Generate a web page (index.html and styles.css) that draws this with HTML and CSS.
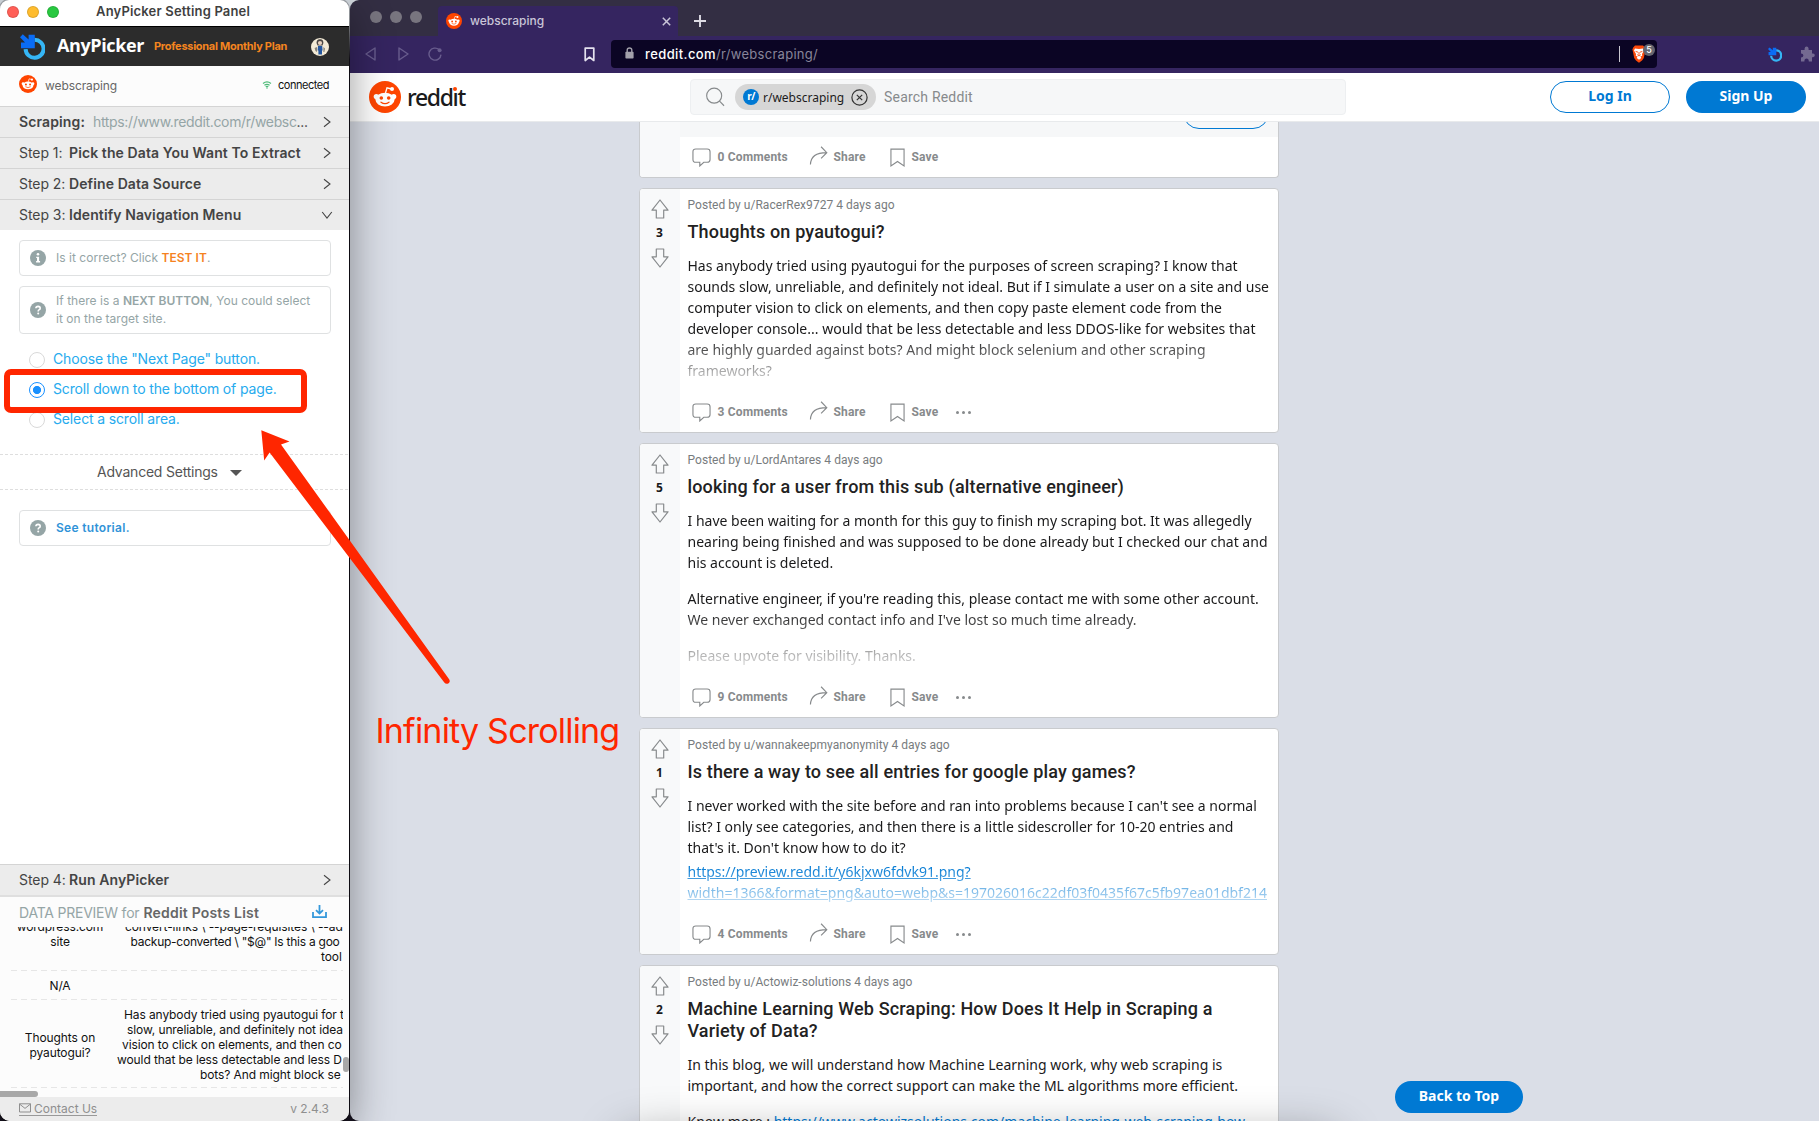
FILE: index.html
```
<!DOCTYPE html>
<html lang="en">
<head>
<meta charset="utf-8">
<title>AnyPicker Setting Panel</title>
<link rel="stylesheet" href="styles.css">
</head>
<body>
<svg class="sprite" width="0" height="0">
  <symbol id="snoo" viewBox="0 0 32 32">
    <circle cx="16" cy="16" r="16" fill="#ff4500"/>
    <path d="M16.5 12 L18 6.8 L22.5 8" fill="none" stroke="#fff" stroke-width="1.3"/>
    <circle cx="23" cy="8" r="2" fill="#fff"/>
    <circle cx="7.3" cy="15.6" r="2.6" fill="#fff"/>
    <circle cx="24.7" cy="15.6" r="2.6" fill="#fff"/>
    <ellipse cx="16" cy="18.6" rx="9.6" ry="6.9" fill="#fff"/>
    <circle cx="12.3" cy="17" r="1.8" fill="#ff4500"/>
    <circle cx="19.7" cy="17" r="1.8" fill="#ff4500"/>
    <path d="M12 21.2 Q16 24 20 21.2" fill="none" stroke="#ff4500" stroke-width="1.3" stroke-linecap="round"/>
  </symbol>
  <symbol id="picker" viewBox="0 0 25 26">
    <path d="M14.5 5.8 A9 9 0 1 1 5.6 15.2" fill="none" stroke="#35b6f5" stroke-width="4"/>
    <path d="M2.8 0.3 L8.6 5.4 V0.8 H14.8 V14.3 H1 V8.6 H5 L0 3.2 Z" fill="#0a6cf5"/>
  </symbol>
  <symbol id="chev" viewBox="0 0 8 12"><path d="M1 1.2 L7 6 L1 10.8" fill="none" stroke="#444" stroke-width="1.1"/></symbol>
  <symbol id="help" viewBox="0 0 16 16">
    <circle cx="8" cy="8" r="8" fill="#95a5a6"/>
    <path d="M5.9 6.3 Q6 4.4 8.1 4.4 Q10.2 4.5 10.2 6.2 Q10.2 7.3 9 7.9 Q8.2 8.3 8.2 9.4" fill="none" stroke="#fff" stroke-width="1.6"/>
    <circle cx="8.2" cy="11.5" r="1" fill="#fff"/>
  </symbol>
  <symbol id="info" viewBox="0 0 16 16">
    <circle cx="8" cy="8" r="8" fill="#95a5a6"/>
    <circle cx="8" cy="4.3" r="1.3" fill="#fff"/>
    <path d="M6.2 6.7 H9.1 V11 H10.1 V12.4 H6.1 V11 H7 V8 H6.2 Z" fill="#fff"/>
  </symbol>
  <symbol id="up" viewBox="0 0 18 20"><path d="M9 1 L17 11.2 H12.7 V19 H5.3 V11.2 H1 Z" fill="none" stroke="#878a8c" stroke-width="1.2" stroke-linejoin="round"/></symbol>
  <symbol id="down" viewBox="0 0 18 20"><path d="M9 19 L17 8.8 H12.7 V1 H5.3 V8.8 H1 Z" fill="none" stroke="#878a8c" stroke-width="1.2" stroke-linejoin="round"/></symbol>
  <symbol id="comment" viewBox="0 0 20 20"><path d="M4 1 H16 Q19 1 19 4 V12 Q19 15 16 15 H12.4 L8.2 18.9 V15 H4 Q1 15 1 12 V4 Q1 1 4 1 Z" fill="none" stroke="#878a8c" stroke-width="1.2"/></symbol>
  <symbol id="share" viewBox="0 0 20 20"><path d="M1 19.5 Q1.5 7 18 7 M12.2 0.8 L18.2 7 L12.2 13" fill="none" stroke="#878a8c" stroke-width="1.2"/></symbol>
  <symbol id="save" viewBox="0 0 16 20"><path d="M1 1 H15 V19 L8 14.2 L1 19 Z" fill="none" stroke="#878a8c" stroke-width="1.2"/></symbol>
</svg>

<div class="desktop">
  <aside class="panel">
    <div class="titlebar">
      <span class="light red"></span><span class="light amber"></span><span class="light green"></span>
      <span class="title">AnyPicker Setting Panel</span>
    </div>
    <header class="brandbar">
      <svg class="brand-icon"><use href="#picker"/></svg>
      <span class="brand">AnyPicker</span>
      <span class="plan">Professional Monthly Plan</span>
      <svg class="avatar" viewBox="0 0 18 18">
        <circle cx="9" cy="9" r="9" fill="#f3ead6"/>
        <path d="M5.5 5 Q5.5 1 9 1.2 Q12.5 1 12.4 5 L11.5 7.5 H6.6 Z" fill="#4a4644"/>
        <circle cx="9" cy="5" r="2.1" fill="#e9d3c0"/>
        <path d="M7 8 H11.2 L11.6 12.5 H11 V16.5 H7.4 V12.5 H6.6 Z" fill="#24569f"/>
        <path d="M3.6 10 L6 9 V14 L4.5 13 Z M12.4 9 L14 10.5 L13.4 14 H12.4 Z" fill="#8a8378"/>
      </svg>
    </header>
    <div class="site">
      <svg class="site-icon"><use href="#snoo"/></svg>
      <span class="site-name">webscraping</span>
      <svg class="wifi" viewBox="0 0 12 10"><path d="M1 3.2 Q6 -0.8 11 3.2 M2.8 5.4 Q6 2.8 9.2 5.4 M4.4 7.3 Q6 6 7.6 7.3" fill="none" stroke="#4dbb78" stroke-width="1.5"/><circle cx="6" cy="8.7" r="0.9" fill="#4dbb78"/></svg>
      <span class="status">connected</span>
    </div>
    <div class="step"><b class="scr">Scraping:</b><span class="url">https://www.reddit.com/r/websc<i>...</i></span><svg class="chev"><use href="#chev"/></svg></div>
    <div class="step"><span>Step 1:</span><b>Pick the Data You Want To Extract</b><svg class="chev"><use href="#chev"/></svg></div>
    <div class="step"><span>Step 2:</span><b>Define Data Source</b><svg class="chev"><use href="#chev"/></svg></div>
    <div class="step last"><span>Step 3:</span><b>Identify Navigation Menu</b><svg class="chev open"><use href="#chev"/></svg></div>
    <main class="work">
      <div class="note"><svg><use href="#info"/></svg><p>Is it correct? Click <b class="test">TEST IT</b>.</p></div>
      <div class="note tall"><svg><use href="#help"/></svg><p>If there is a <b>NEXT BUTTON</b>, You could select<br>it on the target site.</p></div>
      <div class="radios">
        <label><span class="dot"></span><span class="opt">Choose the "Next Page" button.</span></label>
        <label><span class="dot on"></span><span class="opt">Scroll down to the bottom of page.</span></label>
        <label><span class="dot"></span><span class="opt">Select a scroll area.</span></label>
      </div>
      <div class="advanced">Advanced Settings<span class="caret"></span></div>
      <div class="note"><svg><use href="#help"/></svg><p><b class="tut">See tutorial.</b></p></div>
    </main>
    <div class="step run"><span>Step 4:</span><b>Run AnyPicker</b><svg class="chev"><use href="#chev"/></svg></div>
    <div class="preview-head">
      <span>DATA PREVIEW for</span><b>Reddit Posts List</b>
      <svg viewBox="0 0 15 14"><path d="M1 7 V12.2 H14 V7 M7.5 0 V8 M4 5.2 L7.5 8.6 L11 5.2" fill="none" stroke="#3498db" stroke-width="1.8"/></svg>
    </div>
    <div class="table">
      <div class="rows">
        <div class="row cut">
          <div class="c1">wordpress.com<br>site</div>
          <div class="c2"><p class="l1">convert-links \ --page-requisites \ --ad</p><p class="l2">backup-converted \ "$@" Is this a goo</p><p class="l3">tool</p></div>
        </div>
        <div class="row na"><div class="c1">N/A</div><div class="c2"></div></div>
        <div class="row"><div class="c1">Thoughts on<br>pyautogui?</div>
          <div class="c2"><p class="l4">Has anybody tried using pyautogui for t</p><p class="l5">slow, unreliable, and definitely not idea</p><p class="l6">vision to click on elements, and then co</p><p class="l7">would that be less detectable and less D</p><p class="l8">bots? And might block se</p></div>
        </div>
      </div>
      <span class="vbar"></span>
      <span class="hbar"></span>
    </div>
    <footer class="foot">
      <a><svg viewBox="0 0 12 10"><path d="M0.5 0.8 H11.5 V9 H0.5 Z M0.5 1 L6 5.4 L11.5 1" fill="none" stroke="#8f8f8f"/></svg> Contact Us</a>
      <span>v 2.4.3</span>
    </footer>
  </aside>

  <section class="browser">
    <div class="tabs">
      <span class="wdot"></span><span class="wdot"></span><span class="wdot"></span>
      <div class="tab"><svg class="fav"><use href="#snoo"/></svg><span class="tabname">webscraping</span>
        <svg class="close" viewBox="0 0 9 9"><path d="M0.8 0.8 L8.2 8.2 M8.2 0.8 L0.8 8.2" stroke="#c9c5d8" stroke-width="1.5"/></svg></div>
      <svg class="plus" viewBox="0 0 12 12"><path d="M6 0 V12 M0 6 H12" stroke="#dddbe4" stroke-width="1.9"/></svg>
    </div>
    <div class="toolbar">
      <svg class="nav" viewBox="0 0 14 14"><path d="M11 1 V13 L2 7 Z" fill="none" stroke="#685c8d" stroke-width="1.4" stroke-linejoin="round"/></svg>
      <svg class="nav" viewBox="0 0 14 14"><path d="M3 1 V13 L12 7 Z" fill="none" stroke="#685c8d" stroke-width="1.4" stroke-linejoin="round"/></svg>
      <svg class="nav" viewBox="0 0 14 14"><path d="M11 2.6 A6 6 0 1 0 13 7.6" fill="none" stroke="#685c8d" stroke-width="1.4"/><circle cx="11.6" cy="3.2" r="2" fill="#685c8d"/></svg>
      <svg class="mark" viewBox="0 0 10 14"><path d="M1 1 H9 V12.6 L5 9.4 L1 12.6 Z" fill="none" stroke="#e4e1ee" stroke-width="1.6" stroke-linejoin="round"/></svg>
      <div class="omni">
        <svg class="lock" viewBox="0 0 9 12"><rect x="0.4" y="4.8" width="8.2" height="6.8" rx="0.8" fill="#a3a1ab"/><path d="M2.2 5 V3 Q2.3 1 4.5 1 Q6.7 1 6.8 3 V5" fill="none" stroke="#a3a1ab" stroke-width="1.4"/></svg>
        <span class="host">reddit.com</span><span class="path">/r/webscraping/</span>
        <span class="bar"></span>
        <span class="brave"><svg viewBox="0 0 14 18"><path d="M3 0.4 H11 L12.8 2.4 L13.6 4.6 L13 7 L11.8 13 L10 15.5 L7 17.8 L4 15.5 L2.2 13 L1 7 L0.4 4.6 L1.2 2.4 Z" fill="#fb4a0b"/><path d="M3 3.4 L7 4 L11 3.4 L12 5.6 L10 9 L10.2 11 L8.4 11.3 L9.3 13 L7 14.8 L4.7 13 L5.6 11.3 L3.8 11 L4 9 L2 5.6 Z" fill="#fff"/><path d="M3.6 6.4 L6 7.2 M10.4 6.4 L8 7.2 M7 7 V10.2 M5.2 9.6 L7 11 L8.8 9.6" fill="none" stroke="#fb4a0b" stroke-width="0.9"/></svg><em>5</em></span>
      </div>
      <svg class="ext"><use href="#picker"/></svg>
      <svg class="puzzle" viewBox="0 0 15 16"><path d="M1 4 H4.6 V2.6 Q4.8 0.6 6.6 0.6 Q8.4 0.6 8.6 2.6 V4 H12 V7.4 H13 Q14.8 7.6 14.8 9.3 Q14.8 11 13 11.2 H12 V15.4 H8.8 Q8.8 12.6 6.6 12.6 Q4.4 12.6 4.4 15.4 H1 V11.6 Q3.4 11.4 3.4 9.6 Q3.4 7.8 1 7.6 Z" fill="#746a91"/></svg>
    </div>
    <div class="rhead">
      <svg class="snoo"><use href="#snoo"/></svg>
      <span class="word">redd<span class="idot">ı</span>t</span>
      <div class="search">
        <svg class="mag" viewBox="0 0 20 20"><circle cx="8.6" cy="8.6" r="7.9" fill="none" stroke="#878a8c" stroke-width="1.2"/><path d="M14 14 L19 19.2" stroke="#878a8c" stroke-width="1.2"/></svg>
        <span class="pill"><span class="rs">r/</span>r/webscraping<svg viewBox="0 0 17 17"><circle cx="8.5" cy="8.5" r="7.6" fill="none" stroke="#333" stroke-width="1.2"/><path d="M5.8 5.8 L11.2 11.2 M11.2 5.8 L5.8 11.2" stroke="#333" stroke-width="1.2"/></svg></span>
        <span class="ph">Search Reddit</span>
      </div>
      <a class="btn line">Log In</a>
      <a class="btn fill">Sign Up</a>
    </div>
    <div class="feed">
      <article class="card first">
        <div class="votes"></div>
        <div class="main">
          <div class="promo"><span class="cta"></span></div>
          <div class="acts"><svg class="ic"><use href="#comment"/></svg><span class="cm">0 Comments</span><svg class="ish"><use href="#share"/></svg><span class="sh">Share</span><svg class="isv"><use href="#save"/></svg><span>Save</span></div>
        </div>
      </article>

      <article class="card">
        <div class="votes"><svg><use href="#up"/></svg><b>3</b><svg><use href="#down"/></svg></div>
        <div class="main">
          <div class="meta">Posted by u/RacerRex9727 4 days ago</div>
          <h3>Thoughts on pyautogui?</h3>
          <div class="text fade"><p>Has anybody tried using pyautogui for the purposes of screen scraping? I know that<br>sounds slow, unreliable, and definitely not ideal. But if I simulate a user on a site and use<br>computer vision to click on elements, and then copy paste element code from the<br>developer console... would that be less detectable and less DDOS-like for websites that<br>are highly guarded against bots? And might block selenium and other scraping<br>frameworks?</p></div>
          <div class="acts"><svg class="ic"><use href="#comment"/></svg><span class="cm">3 Comments</span><svg class="ish"><use href="#share"/></svg><span class="sh">Share</span><svg class="isv"><use href="#save"/></svg><span>Save</span><span class="dots"><i></i><i></i><i></i></span></div>
        </div>
      </article>

      <article class="card">
        <div class="votes"><svg><use href="#up"/></svg><b>5</b><svg><use href="#down"/></svg></div>
        <div class="main">
          <div class="meta">Posted by u/LordAntares 4 days ago</div>
          <h3>looking for a user from this sub (alternative engineer)</h3>
          <div class="text fade"><p>I have been waiting for a month for this guy to finish my scraping bot. It was allegedly<br>nearing being finished and was supposed to be done already but I checked our chat and<br>his account is deleted.</p><p>Alternative engineer, if you're reading this, please contact me with some other account.<br>We never exchanged contact info and I've lost so much time already.</p><p>Please upvote for visibility. Thanks.</p></div>
          <div class="acts"><svg class="ic"><use href="#comment"/></svg><span class="cm">9 Comments</span><svg class="ish"><use href="#share"/></svg><span class="sh">Share</span><svg class="isv"><use href="#save"/></svg><span>Save</span><span class="dots"><i></i><i></i><i></i></span></div>
        </div>
      </article>

      <article class="card">
        <div class="votes"><svg><use href="#up"/></svg><b>1</b><svg><use href="#down"/></svg></div>
        <div class="main">
          <div class="meta">Posted by u/wannakeepmyanonymity 4 days ago</div>
          <h3>Is there a way to see all entries for google play games?</h3>
          <div class="text fade"><p>I never worked with the site before and ran into problems because I can't see a normal<br>list? I only see categories, and then there is a little sidescroller for 10-20 entries and<br>that's it. Don't know how to do it?</p><p class="tight"><a>https://preview.redd.it/y6kjxw6fdvk91.png?<br>width=1366&amp;format=png&amp;auto=webp&amp;s=197026016c22df03f0435f67c5fb97ea01dbf214</a></p></div>
          <div class="acts"><svg class="ic"><use href="#comment"/></svg><span class="cm">4 Comments</span><svg class="ish"><use href="#share"/></svg><span class="sh">Share</span><svg class="isv"><use href="#save"/></svg><span>Save</span><span class="dots"><i></i><i></i><i></i></span></div>
        </div>
      </article>

      <article class="card">
        <div class="votes"><svg><use href="#up"/></svg><b>2</b><svg><use href="#down"/></svg></div>
        <div class="main">
          <div class="meta">Posted by u/Actowiz-solutions 4 days ago</div>
          <h3>Machine Learning Web Scraping: How Does It Help in Scraping a<br>Variety of Data?</h3>
          <div class="text"><p>In this blog, we will understand how Machine Learning work, why web scraping is<br>important, and how the correct support can make the ML algorithms more efficient.</p><p>Know more : <a>https://www.actowizsolutions.com/machine-learning-web-scraping-how-</a></p></div>
        </div>
      </article>
      <a class="btn fill top">Back to Top</a>
      <div class="haze"></div>
    </div>
  </section>

  <div class="mark-box"></div>
  <svg class="arrow" viewBox="0 0 200 260"><path d="M1.3 0.3 L29.5 11.6 L21 14.4 L189.3 249.5 Q190.5 252 188.6 253.2 Q186 254.6 184.3 252.4 L9.6 22.6 L4.2 30.4 Z" fill="#ff2600"/></svg>
  <div class="label">Infinity Scrolling</div>
</div>
</body>
</html>
```
FILE: styles.css
```
* { box-sizing: border-box; }
html, body { margin: 0; height: 100%; overflow: hidden; }
body { font-family: Inter, "Liberation Sans", sans-serif; background: #17131f; }
p, h3 { margin: 0; }
svg { display: block; flex: none; }
.sprite { position: absolute; }

.desktop { position: relative; display: flex; gap: 1px; width: 1819px; height: 1121px; background: linear-gradient(#d5dbe2 0 20px, #17131f 60px); overflow: hidden; }

/* Setting panel */
.panel { position: relative; z-index: 2; display: flex; flex-direction: column; width: 349px; height: 1121px; flex: none; background: #fff; border-radius: 9px 9px 10px 10px; box-shadow: 0 0 0 1px rgba(0,0,0,.25), 0 12px 44px rgba(0,0,0,.42); color: #444; white-space: nowrap; }
.panel > * { flex: none; }
.titlebar { display: flex; align-items: center; height: 27px; padding: 0 0 3px 7px; gap: 8px; border-bottom: 1px solid #000; }
.light { width: 12px; height: 12px; border-radius: 50%; border: 1px solid rgba(0,0,0,.12); }
.red { background: #ff5f57; }
.amber { background: #febc2e; }
.green { background: #28c840; }
.title { margin: -1px 0 0 29px; font-size: 13px; font-weight: 600; letter-spacing: .18px; color: #3f3f3f; }
.brandbar { display: flex; align-items: center; height: 39px; padding: 0 20px 0 20px; background: #2c2c2c; }
.brand-icon { width: 25px; height: 26px; }
.brand { margin: -3px 0 0 12px; width: 97px; font: 700 18px/24px "Open Sans", sans-serif; letter-spacing: -.39px; color: #fff; }
.plan { margin-top: -1px; font-size: 11px; font-weight: 700; letter-spacing: -.28px; color: #f5851f; }
.avatar { width: 18px; height: 18px; margin-left: auto; }
.site { display: flex; align-items: center; height: 40px; padding: 0 20px 0 19px; background: #fcfcfc; }
.site-icon { width: 18px; height: 18px; margin-top: -4px; }
.site-name { margin: -2px 0 0 8px; font-size: 12px; letter-spacing: -.1px; color: #666; }
.wifi { width: 10px; height: 8px; margin: -2px 6px 0 auto; }
.status { margin: -2px 0 0; font-size: 11px; letter-spacing: -.47px; color: #111; width: 51px; }
.step { display: flex; align-items: center; height: 31px; padding: 0 18px 0 19px; background: #ececec; border-top: 1px solid #d4d4d4; font-size: 14px; letter-spacing: .1px; color: #444; }
.step b { font-weight: 600; }
.step b, .step span { margin-top: -2px; }
.step span:first-child { width: 50px; letter-spacing: -.05px; }
.step.run { height: 33px; border-bottom: 2px solid #dfdfdf; }
.scr { letter-spacing: .12px; }
.step .url { margin-left: 8px; letter-spacing: -.34px; color: #95a5a6; }
.url i { font-style: normal; color: #444; }
.chev { width: 8px; height: 12px; margin: -1px 0 0 auto; }
.chev.open { transform: rotate(90deg); }
.work { height: 634px; padding-top: 10px; }
.note { display: flex; align-items: center; gap: 10px; height: 36px; margin: 0 18px 10px 19px; padding-left: 10px; border: 1px solid #dfe1e2; border-radius: 4px; font-size: 12px; line-height: 18px; letter-spacing: .03px; color: #95a5a6; }
.note.tall { height: 48px; }
.note svg { width: 16px; height: 16px; }
.note b { font-weight: 600; }
.test { color: #f5821f; }
.note .tut { color: #3093d8; letter-spacing: .3px; }
.radios { display: flex; flex-direction: column; padding: 1px 0 0 29px; height: 110px; }
.radios label { display: flex; align-items: center; height: 30px; gap: 8px; font-size: 14px; letter-spacing: -.14px; color: #27abee; }
.opt { margin-top: -3px; }
.dot { width: 16px; height: 16px; border: 1px solid #d9d9d9; border-radius: 50%; background: #fff; }
.dot.on { border-color: #1890ff; background: radial-gradient(circle, #1890ff 0 3.7px, #fff 4.4px); }
.advanced { display: flex; align-items: center; height: 36px; margin-bottom: 20px; padding: 0 0 2px 97px; background: repeating-linear-gradient(90deg, #dedede 0 3px, transparent 3px 5px) 0 0 / 100% 1px no-repeat, repeating-linear-gradient(90deg, #dedede 0 3px, transparent 3px 5px) 0 100% / 100% 1px no-repeat; font-size: 14px; letter-spacing: -.22px; color: #555; }
.caret { margin: 3px 0 0 12px; border: 6px solid transparent; border-top: 6px solid #555; border-bottom: 0; }
.preview-head { display: flex; align-items: center; height: 30px; padding: 0 22px 0 19px; background: #fcfcfc; font-size: 14px; letter-spacing: -.22px; color: #95a5a6; }
.preview-head b { margin-left: 4px; font-weight: 600; letter-spacing: .2px; color: #666; }
.preview-head svg { width: 15px; height: 14px; margin-left: auto; }
.table { position: relative; height: 170px; background: #fcfcfc; overflow: hidden; }
.rows { width: 332px; margin-left: 11px; overflow: hidden; }
.row { display: flex; align-items: center; padding: 7px 0 6px; background: repeating-linear-gradient(90deg, #e6e6e6 0 6px, transparent 6px 10px) 0 100% / 100% 1px no-repeat; font-size: 12px; line-height: 15px; letter-spacing: -.1px; color: #111; }
.row.cut { margin-top: -15px; align-items: flex-start; height: 59px; }
.row.na { height: 29px; padding: 6px 0 7px; }
.c1 { flex: none; width: 98px; text-align: center; }
.c2 { flex: none; width: 240px; }
.c2 p { height: 15px; }
.l1 { padding-left: 16px; }
.l2 { padding-left: 21.5px; letter-spacing: -.25px; }
.l3 { padding-left: 212px; }
.l4 { padding-left: 15px; }
.l5 { padding-left: 18px; }
.l6 { padding-left: 13px; }
.l7 { padding-left: 8px; }
.l8 { padding-left: 91px; }
.vbar { position: absolute; left: 343px; top: 130px; width: 6px; height: 15px; border-radius: 3px; background: #a8a8a8; }
.hbar { position: absolute; left: -4px; bottom: 0; width: 42px; height: 6px; border-radius: 3px; background: #a8a8a8; }
.foot { display: flex; align-items: center; justify-content: space-between; height: 24px; padding: 0 20px 1px 19px; background: #ececec; border-radius: 0 0 10px 10px; font-size: 12px; color: #8f8f8f; }
.foot a { display: flex; gap: 3px; align-items: center; height: 14px; border-bottom: 1px solid #999; }
.foot svg { width: 12px; height: 10px; }

/* Browser window */
.browser { display: flex; flex-direction: column; width: 1469px; height: 1121px; background: #dadee7; border-radius: 9px 0 0 9px; overflow: hidden; white-space: nowrap; }
.browser > * { flex: none; }
.tabs { display: flex; align-items: center; height: 36px; padding-left: 20px; gap: 8px; background: #332e43; }
.wdot { width: 12px; height: 12px; margin-top: -2px; border-radius: 50%; background: #78757f; }
.tab { display: flex; align-items: center; width: 240px; height: 30px; margin: 6px 0 0 8px; padding: 0 7px 0 8px; background: #352560; border-radius: 4px 4px 0 0; font-size: 12px; font-weight: 500; color: #c9c5d8; }
.tabname { margin-top: -2px; }
.fav { width: 16px; height: 16px; margin-right: 8px; }
.close { width: 9px; height: 9px; margin-left: auto; }
.plus { width: 12px; height: 12px; margin: 6px 0 0 8px; }
.toolbar { display: flex; align-items: center; height: 37px; padding: 0 4px 1px 14px; background: #352560; }
.nav { width: 14px; height: 14px; margin-right: 18px; }
.mark { width: 11px; height: 15px; margin: 0 16px 0 124px; }
.omni { display: flex; align-items: center; width: 1047px; height: 28px; padding: 0 2px 0 14px; background: #0b0524; border-radius: 4px; font-size: 13px; }
.omni .host, .omni .path { margin-top: -1px; }
.lock { width: 9px; height: 12px; margin: -2px 11px 0 0; }
.host { font-weight: 500; letter-spacing: .4px; color: #fff; }
.path { letter-spacing: .29px; color: #88859a; }
.bar { width: 1px; height: 16px; margin: 0 12px 0 auto; background: #c9c7d0; }
.brave { position: relative; width: 23px; height: 18px; }
.brave svg { width: 14px; height: 18px; }
.brave em { position: absolute; left: 11px; top: -1px; width: 12px; height: 12px; border-radius: 50%; background: #66666f; color: #fff; font: 500 9px/12px Inter, sans-serif; text-align: center; }
.ext { width: 14px; height: 15px; margin-left: 111px; }
.puzzle { width: 15px; height: 16px; margin-left: 18px; }
.rhead { display: flex; align-items: center; height: 49px; padding: 0 13px 0 19px; background: #fff; border-bottom: 1px solid #e8eaec; font-family: "Noto Sans", sans-serif; }
.snoo { width: 32px; height: 32px; }
.word { margin-left: 6px; width: 283px; font: 500 23px/28px "Noto Sans", sans-serif; letter-spacing: -1.35px; color: #1a1a1b; }
.idot { position: relative; }
.idot::before { content: ""; position: absolute; left: 50%; top: 6px; width: 4px; height: 4px; margin-left: -2px; border-radius: 50%; background: #ff4500; }
.search { display: flex; align-items: center; width: 656px; height: 36px; margin-right: 204px; padding-left: 15px; background: #f6f7f8; border: 1px solid #edeff1; border-radius: 4px; }
.mag { width: 19px; height: 20px; margin-right: 10px; }
.pill { display: flex; align-items: center; width: 141px; height: 26px; padding: 0 8px; border-radius: 13px; background: #d6d6d6; font-size: 12px; color: #1c1c1c; }
.rs { width: 16px; height: 16px; margin-right: 4px; border-radius: 50%; background: #0079d3; color: #fff; font: 700 10px/15px "Noto Sans", sans-serif; letter-spacing: -.5px; text-align: center; }
.pill svg { width: 17px; height: 17px; margin-left: auto; }
.ph { margin-left: 8px; font: 400 14px/20px Roboto, sans-serif; letter-spacing: .2px; color: #878a8c; }
.btn { display: flex; align-items: center; justify-content: center; width: 120px; height: 32px; border-radius: 16px; font: 700 14px/18px "Noto Sans", sans-serif; padding-bottom: 2px; }
.btn.line { margin-right: 16px; border: 1px solid #0079d3; color: #0079d3; }
.btn.fill { background: #0079d3; color: #fff; }
.feed { position: relative; display: flex; flex-direction: column; gap: 10px; height: 999px; padding-left: 289px; overflow: hidden; }
.card { display: flex; flex: none; width: 640px; background: #fff; border: 1px solid #c9cbce; border-radius: 4px; overflow: hidden; }
.card.first { height: 56px; border-top: 0; border-radius: 0 0 4px 4px; }
.votes { display: flex; flex-direction: column; align-items: center; width: 40px; flex: none; padding: 10px 1px 0 0; background: #f8f9fa; }
.votes svg { width: 18px; height: 20px; }
.votes b { font: 700 12px/27px "Noto Sans", sans-serif; padding-bottom: 2px; color: #1a1a1b; }
.main { flex: 1; padding-top: 8px; }
.first .main { padding-top: 0; }
.promo { height: 15px; background: #f6f7f8; overflow: hidden; display: flex; justify-content: flex-end; padding-right: 9px; }
.cta { width: 86px; height: 32px; margin-top: -25px; border: 1px solid #0079d3; border-radius: 16px; }
.meta { padding-left: 7.5px; font: 400 12px/16px Roboto, sans-serif; letter-spacing: .04px; color: #787c7e; }
h3 { padding: 8px 0 0 7.5px; font: 500 18px/22px Roboto, sans-serif; letter-spacing: .15px; color: #222; }
.text { margin-top: 12px; padding: 0 0 11px 7.5px; font: 400 14px/21px "Noto Sans", sans-serif; color: #1a1a1b; }
.text p + p { margin-top: 15px; }
.text p.tight { margin-top: 3px; }
.text a { color: #0079d3; text-decoration: underline; }
.fade { -webkit-mask-image: linear-gradient(#000 60%, transparent); mask-image: linear-gradient(#000 60%, transparent); }
.acts { display: flex; align-items: center; height: 40px; padding-left: 12px; font: 700 12px/16px Roboto, sans-serif; letter-spacing: .17px; color: #878a8c; }
.ic { width: 19px; height: 19px; margin: 1px 6.5px 0 0; }
.cm { width: 91px; }
.ish { width: 20px; height: 19px; margin: -4px 5px 0 0; }
.sh { width: 56px; }
.isv { width: 15px; height: 19px; margin: 1px 7px 0 0; }
.dots { display: flex; gap: 3px; margin-left: 18px; }
.dots i { width: 3px; height: 3px; border-radius: 50%; background: #878a8c; }
.btn.top { position: absolute; left: 1045px; top: 959px; width: 128px; z-index: 3; }
.haze { position: absolute; left: 270px; width: 720px; top: 1014px; height: 40px; border-radius: 30px; box-shadow: 0 0 46px rgba(0,0,0,.38); }

/* Annotations */
.mark-box { position: absolute; z-index: 4; left: 4px; top: 369px; width: 303px; height: 44px; border: 6px solid #ff2600; border-radius: 7px; }
.arrow { position: absolute; z-index: 4; left: 260px; top: 430px; width: 200px; height: 260px; }
.label { position: absolute; z-index: 4; left: 375.5px; top: 710px; font: 400 34px/42px Inter, sans-serif; letter-spacing: -.8px; color: #ff2600; white-space: nowrap; }
```
